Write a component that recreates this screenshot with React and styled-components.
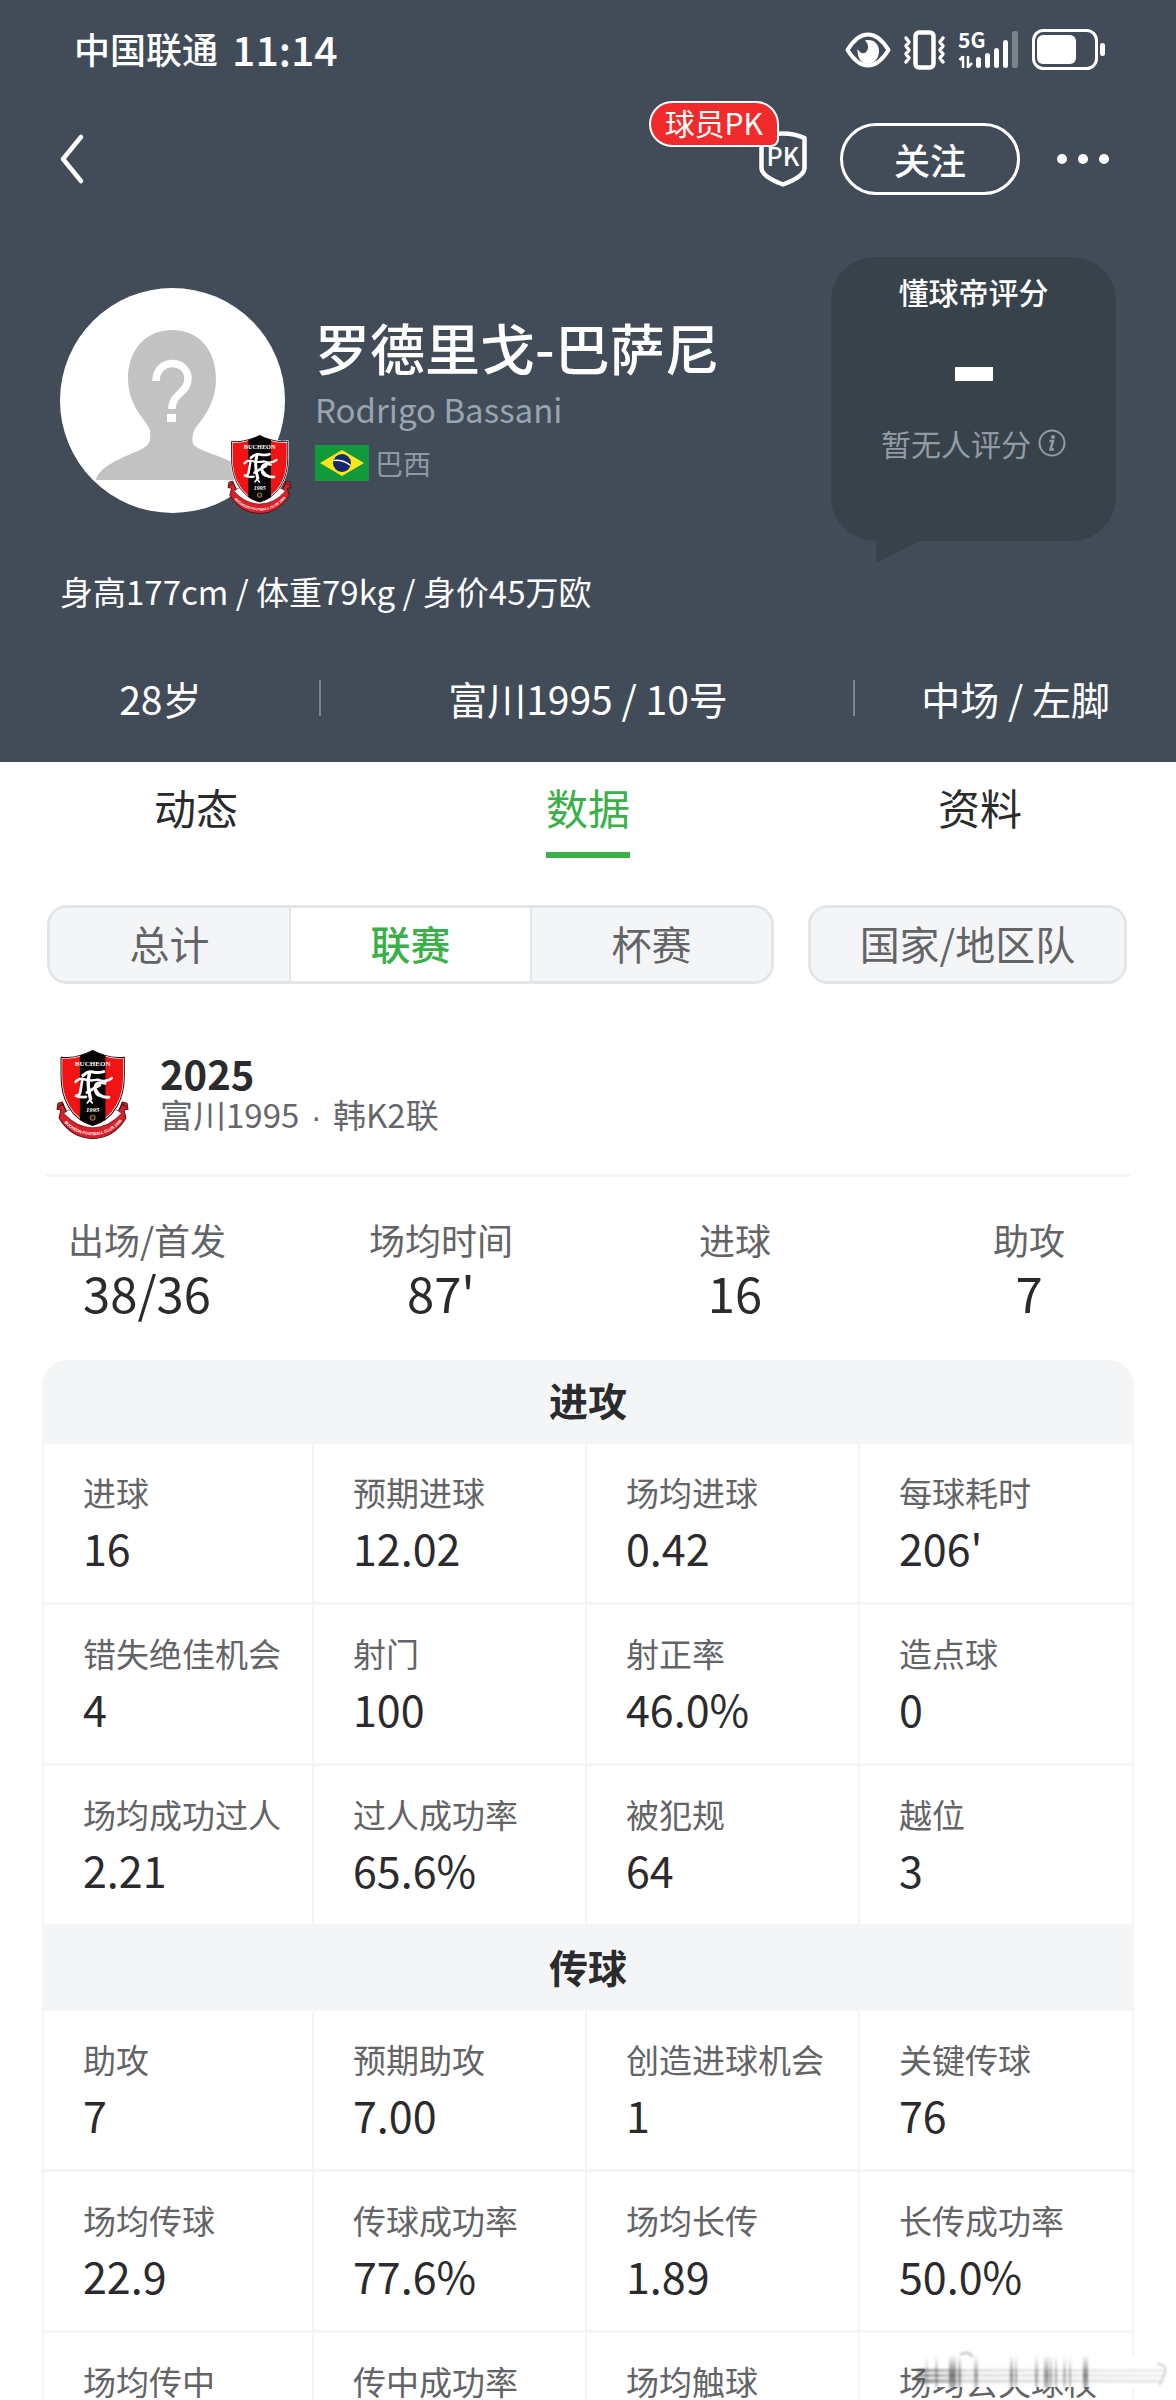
import styled, { createGlobalStyle } from 'styled-components';

const GlobalStyle = createGlobalStyle`
  * {
    box-sizing: border-box;
    margin: 0;
    padding: 0;
  }

  body {
    font-family: 'Noto Sans CJK SC', 'Noto Sans', sans-serif;
    background: #ffffff;
    color: #2b2b2d;
  }

  button {
    font-family: inherit;
    border: none;
    background: none;
    cursor: pointer;
  }

  svg {
    overflow: visible;
  }
`;

const Page = styled.div`
  height: 100vh;
  overflow: hidden;
`;

const Header = styled.header`
  background-color: #414c58;
  color: #ffffff;
  padding-bottom: 35px;
`;

const StatusBar = styled.div`
  display: flex;
  align-items: center;
  justify-content: space-between;
  height: 100px;
  padding: 0 70px 0 74px;
`;

const Carrier = styled.div`
  display: flex;
  align-items: center;
  gap: 14px;
  padding-bottom: 5px;
  font-size: 36px;
  font-weight: 500;
  line-height: 48px;
`;

const Clock = styled.span`
  font-size: 41px;
  font-weight: 500;
`;

const StatusIcons = styled.div`
  display: flex;
  align-items: center;
  gap: 12px;
`;

const NavBar = styled.nav`
  display: flex;
  align-items: center;
  height: 118px;
  padding: 0 64px 0 54px;
`;

const IconButton = styled.button`
  display: flex;
  align-items: center;
  color: #ffffff;
`;

const PkButton = styled(IconButton)`
  position: relative;
  margin-left: auto;
`;

const PkBadge = styled.span`
  position: absolute;
  right: 28px;
  bottom: 40px;
  height: 46px;
  padding: 0 14px;
  border: 2px solid #ffffff;
  border-radius: 23px 23px 8px 23px;
  background-color: #f12b2b;
  font-size: 30px;
  line-height: 39px;
  white-space: nowrap;
`;

const FollowButton = styled.button`
  width: 180px;
  height: 72px;
  margin: 0 34px 0 33px;
  border: 3px solid #ffffff;
  border-radius: 36px;
  color: #ffffff;
  font-size: 36px;
  font-weight: 500;
  line-height: 62px;
`;

const Profile = styled.section`
  display: flex;
  align-items: flex-start;
  padding: 39px 60px 0;
`;

const Avatar = styled.div`
  position: relative;
  width: 225px;
  height: 225px;
  margin-top: 31px;
`;

const AvatarCrest = styled.span`
  position: absolute;
  right: -6px;
  bottom: -1px;
  display: flex;
`;

const Identity = styled.div`
  flex: 1;
  margin: 54px 0 0 30px;
`;

const PlayerName = styled.h1`
  font-size: 55px;
  font-weight: 500;
  line-height: 70px;
`;

const LatinName = styled.p`
  margin-top: 4px;
  color: #9aa4af;
  font-size: 33px;
  line-height: 48px;
`;

const Country = styled.p`
  display: flex;
  align-items: center;
  gap: 6px;
  margin-top: 10px;
  color: #8f99a3;
  font-size: 28px;
  line-height: 40px;
`;

const ScoreBubble = styled.aside`
  position: relative;
  display: flex;
  flex-direction: column;
  align-items: center;
  width: 285px;
  height: 284px;
  padding-top: 14px;
  border-radius: 44px;
  background-color: #37424a;

  &::after {
    content: '';
    position: absolute;
    left: 45px;
    top: 283px;
    width: 46px;
    height: 23px;
    background-color: #37424a;
    clip-path: polygon(0 0, 100% 0, 0 100%);
  }
`;

const ScoreTitle = styled.h2`
  font-size: 30px;
  font-weight: 500;
  line-height: 40px;
`;

const ScoreDash = styled.span`
  width: 38px;
  height: 14px;
  margin: 56px 0 42px;
  background-color: #ffffff;
`;

const ScoreNote = styled.p`
  display: flex;
  align-items: center;
  gap: 7px;
  color: #949aa3;
  font-size: 30px;
  line-height: 40px;
`;

const Physique = styled.p`
  padding: 26px 60px 0;
  font-size: 33px;
  line-height: 48px;
`;

const Facts = styled.ul`
  display: grid;
  grid-template-columns: 3fr 5fr 3fr;
  margin-top: 54px;
  list-style: none;
`;

const Fact = styled.li`
  display: flex;
  align-items: center;
  justify-content: center;
  position: relative;
  font-size: 39px;
  line-height: 58px;

  & + &::before {
    content: '';
    position: absolute;
    left: -2px;
    width: 2px;
    height: 36px;
    background-color: #7d858f;
  }
`;

const Tabs = styled.div`
  display: grid;
  grid-template-columns: repeat(3, 1fr);
  justify-items: center;
  padding-top: 16px;
`;

const Tab = styled.button`
  padding-bottom: 16px;
  border-bottom: 6px solid ${(props) => (props.$active ? '#3bb04a' : 'transparent')};
  color: ${(props) => (props.$active ? '#3bb04a' : '#2b2b2d')};
  font-size: 42px;
  line-height: 58px;
`;

const Filters = styled.div`
  display: flex;
  gap: 34px;
  padding: 47px 49px 0 47px;
`;

const Segment = styled.div`
  display: flex;
  flex: 730;
  border: 3px solid #e3e6e9;
  border-radius: 20px;
  background-color: #f4f5f7;
  overflow: hidden;
`;

const SegmentButton = styled.button`
  flex: 1;
  padding-bottom: 2px;
  color: ${(props) => (props.$active ? '#3bb04a' : '#636466')};
  background-color: ${(props) => (props.$active ? '#ffffff' : '#f4f5f7')};
  font-size: 40px;
  font-weight: ${(props) => (props.$active ? 500 : 400)};
  line-height: 71px;

  & + & {
    border-left: 2px solid #e3e6e9;
  }
`;

const NationalSegment = styled(Segment)`
  flex: 317;
`;

const Season = styled.section`
  display: flex;
  align-items: center;
  gap: 32px;
  margin: 0 46px;
  padding: 66px 0 35px 11px;
  border-bottom: 3px solid #f5f5f7;
`;

const SeasonYear = styled.h2`
  font-size: 40px;
  font-weight: 700;
  line-height: 42px;
`;

const SeasonClub = styled.p`
  color: #66676a;
  font-size: 33px;
  line-height: 40px;
`;

const Dot = styled.span`
  margin: 0 4px;
  font-family: 'Liberation Sans', sans-serif;
`;

const Summary = styled.div`
  display: grid;
  grid-template-columns: repeat(4, 1fr);
  padding: 37px 0 40px;
  text-align: center;
`;

const SummaryLabel = styled.dt`
  color: #636466;
  font-size: 36px;
  line-height: 50px;
`;

const SummaryValue = styled.dd`
  font-size: 49px;
  line-height: 56px;
`;

const StatsPanel = styled.main`
  margin: 0 42px;
`;

const GroupTitle = styled.h3`
  background-color: #f4f5f7;
  border-radius: ${(props) => (props.$first ? '26px 26px 0 0' : '0')};
  font-size: 39px;
  font-weight: 700;
  line-height: 78px;
  padding-bottom: 6px;
  text-align: center;
`;

const StatGrid = styled.div`
  display: grid;
  grid-template-columns: 270fr 273fr 273fr 272fr;
  border: solid #f4f5f7;
  border-width: 0 2px;
`;

const Stat = styled.dl`
  position: relative;
  min-height: 161px;
  padding: 24px 0 0 39px;
  border-bottom: 3px solid #f5f5f7;
  white-space: nowrap;

  &:not(:nth-child(4n)) {
    border-right: 2px solid #f4f5f7;
  }
`;

const StatLabel = styled.dt`
  color: #636466;
  font-size: 33px;
  line-height: 48px;
`;

const StatValue = styled.dd`
  margin-top: 3px;
  font-size: 43px;
  line-height: 56px;
`;

const SmearArt = styled.svg`
  position: absolute;
  left: 57px;
  top: 16px;
`;

const facts = ['28岁', '富川1995 / 10号', '中场 / 左脚'];
const tabs = ['动态', '数据', '资料'];
const scopes = ['总计', '联赛', '杯赛'];

const summary = [
  ['出场/首发', '38/36'],
  ['场均时间', "87'"],
  ['进球', '16'],
  ['助攻', '7'],
];

const groups = [
  {
    title: '进攻',
    stats: [
      ['进球', '16'],
      ['预期进球', '12.02'],
      ['场均进球', '0.42'],
      ['每球耗时', "206'"],
      ['错失绝佳机会', '4'],
      ['射门', '100'],
      ['射正率', '46.0%'],
      ['造点球', '0'],
      ['场均成功过人', '2.21'],
      ['过人成功率', '65.6%'],
      ['被犯规', '64'],
      ['越位', '3'],
    ],
  },
  {
    title: '传球',
    stats: [
      ['助攻', '7'],
      ['预期助攻', '7.00'],
      ['创造进球机会', '1'],
      ['关键传球', '76'],
      ['场均传球', '22.9'],
      ['传球成功率', '77.6%'],
      ['场均长传', '1.89'],
      ['长传成功率', '50.0%'],
      ['场均传中'],
      ['传中成功率'],
      ['场均触球'],
      ['场均丢失球权'],
    ],
  },
];

const EyeIcon = () => (
  <svg width="46" height="36" viewBox="0 0 46 36" fill="none">
    <path d="M2.5 18Q12 2.5 23 2.5T43.5 18Q34 33.5 23 33.5T2.5 18Z" stroke="#fff" strokeWidth="4" strokeLinejoin="round" />
    <path d="M20 8.5C28 6.5 34 12 34 19C34 27 28 32 23 32C16 32 12 25 12.5 17C15 21 18 22 20.5 20.5C24 18 24 12 20 8.5Z" fill="#fff" />
  </svg>
);

const VibrateIcon = () => (
  <svg width="43" height="40" viewBox="0 0 43 40" fill="none" stroke="#fff" strokeLinecap="round" strokeLinejoin="round">
    <rect x="12.5" y="2.5" width="18" height="35" rx="3.5" strokeWidth="4.5" />
    <path d="M3 8l3 4-3 4 3 4-3 4 3 4-3 4M40 8l-3 4 3 4-3 4 3 4-3 4 3 4" strokeWidth="3.5" />
  </svg>
);

const SignalIcon = () => (
  <svg width="62" height="40" viewBox="0 0 62 40" fill="#fff">
    <text x="0" y="18" fontSize="21" fontWeight="700" fontFamily="'Liberation Sans Narrow', 'Noto Sans CJK SC', sans-serif">5G</text>
    <path d="M5 26v12M5 26.5L1.5 30M10 26v12M10 37.5L14 33" stroke="#fff" strokeWidth="2.5" fill="none" />
    <rect x="18" y="27" width="5" height="11" rx="2.5" />
    <rect x="27" y="23" width="5" height="15" rx="2.5" />
    <rect x="36" y="18" width="5" height="20" rx="2.5" />
    <rect x="45" y="10" width="5" height="28" rx="2.5" />
    <rect x="54" y="1" width="6" height="37" rx="2.5" opacity="0.3" />
  </svg>
);

const BatteryIcon = () => (
  <svg width="74" height="42" viewBox="0 0 74 42">
    <rect x="1.5" y="1.5" width="63" height="38" rx="10" fill="none" stroke="#fff" strokeWidth="3" />
    <rect x="5" y="6" width="39" height="29" rx="6" fill="#fff" />
    <rect x="68" y="14" width="5" height="13" rx="2.5" fill="#fff" />
  </svg>
);

const BackIcon = () => (
  <svg width="36" height="50" viewBox="0 0 36 50" fill="none">
    <path d="M27 3L9 25L27 47" stroke="#fff" strokeWidth="4.5" strokeLinecap="round" strokeLinejoin="round" />
  </svg>
);

const PkShield = () => (
  <svg width="48" height="56" viewBox="0 0 48 56" fill="none">
    <path d="M24 2.5C32 2.5 39 4 45.5 7V37C45.5 44 36 49 24 53.5C12 49 2.5 44 2.5 37V7C9 4 16 2.5 24 2.5Z" stroke="#fff" strokeWidth="4.5" strokeLinejoin="round" />
    <text x="24" y="35" textAnchor="middle" fontSize="25" fontWeight="500" fill="#fff" fontFamily="'Noto Sans CJK SC', sans-serif">PK</text>
  </svg>
);

const MoreIcon = () => (
  <svg width="58" height="12" viewBox="0 0 58 12" fill="#fff">
    <circle cx="8" cy="6" r="5" />
    <circle cx="29" cy="6" r="5" />
    <circle cx="50" cy="6" r="5" />
  </svg>
);

const AvatarArt = () => (
  <svg width="225" height="225" viewBox="0 0 225 225">
    <circle cx="112.5" cy="112.5" r="112.5" fill="#fff" />
    <path
      d="M112 42C139 42 156 62 156 91C156 112 146 127 137 138C132 144 132 151 133 156C142 167 180 168 188 192H36C38 180 60 170 78 163C86 159 92 156 90 144C90 139 87 137 83 131C72 116 68 104 68 90C68 62 86 42 112 42Z"
      fill="#c2c2c2"
    />
    <path d="M96 93C96 70 128 70 128 91C128 105 112 105 112 121" fill="none" stroke="#fff" strokeWidth="7.5" />
    <rect x="107" y="126" width="9" height="8" fill="#fff" />
  </svg>
);

const Crest = ({ width, height, id }) => (
  <svg width={width} height={height} viewBox="0 0 211 264">
    <path d="M16 154L3 158L0 176L12 178L6 202Q42 262 106 263Q169 262 205 202L199 178L211 176L208 158L194 154L176 200H34Z" fill="#d9202a" stroke="#4d0f14" strokeWidth="3" strokeLinejoin="round" />
    <path d="M4 172L16 160L28 180M207 172L195 160L183 180" fill="none" stroke="#4d0f14" strokeWidth="3" />
    <path d="M20 188Q58 230 106 231Q154 230 192 188L178 178H34Z" fill="#fff" stroke="#4d0f14" strokeWidth="2" />
    <path d="M12 21Q44 25 71 15Q91 9 106 1Q121 9 141 15Q168 25 200 21V78C200 143 172 205 106 224C40 205 12 143 12 78Z" fill="#f21414" stroke="#fff" strokeWidth="7" strokeLinejoin="round" />
    <path d="M68 16Q91 9 106 1Q121 9 144 16V208Q128 219 106 224Q84 219 68 208Z" fill="#050505" />
    <path d="M12 21Q44 25 71 15Q91 9 106 1Q121 9 141 15Q168 25 200 21V78C200 143 172 205 106 224C40 205 12 143 12 78Z" fill="none" stroke="#1c0708" strokeWidth="3" strokeLinejoin="round" />
    <text x="106" y="47" textAnchor="middle" fontFamily="'Liberation Serif', serif" fontSize="21" fontWeight="700" fill="#fff">BUCHEON</text>
    <g fill="none" stroke="#fff" strokeLinecap="round">
      <path d="M77 76Q92 61 107 65T139 64" strokeWidth="9" />
      <path d="M55 95Q66 81 82 87T121 88Q146 98 163 83" strokeWidth="7" />
      <path d="M97 67Q87 102 100 145" strokeWidth="10" />
      <path d="M75 89L69 126Q65 139 54 134Q65 142 86 139" strokeWidth="8" />
      <path d="M143 99Q112 91 113 114Q114 137 132 136" strokeWidth="8" />
      <path d="M89 126Q115 110 127 104M112 113Q126 144 154 140" strokeWidth="9" />
      <path d="M97 133V150M90 157L97 148L105 157" strokeWidth="5" />
    </g>
    <text x="106" y="184" textAnchor="middle" fontFamily="'Liberation Serif', serif" fontSize="20" fontWeight="700" fontStyle="italic" fill="#fff">1995</text>
    <circle cx="106" cy="201" r="9" fill="#9b7446" />
    <path d="M106 194l6 5-2 7h-8l-2-7z" fill="#30200f" />
    <path id={id} d="M21 215Q56 252 106 253Q156 252 194 211" fill="none" />
    <text fontFamily="'Liberation Sans', sans-serif" fontSize="12" fontWeight="700" fill="#fff">
      <textPath href={`#${id}`} startOffset="50%" textAnchor="middle">BUCHEON FOOTBALL CLUB 1995</textPath>
    </text>
  </svg>
);

const BrazilFlag = () => (
  <svg width="54" height="36" viewBox="0 0 54 36">
    <rect width="54" height="36" fill="#119a3b" />
    <path d="M27 5L49 18L27 31L5 18Z" fill="#fde51a" />
    <circle cx="27" cy="18" r="9" fill="#14286c" />
    <path d="M18.5 15.5Q28 14.5 35.5 20.5" fill="none" stroke="#fff" strokeWidth="1.5" />
  </svg>
);

const InfoIcon = () => (
  <svg width="28" height="28" viewBox="0 0 28 28" fill="none" stroke="#949aa3">
    <circle cx="14" cy="14" r="12.5" strokeWidth="2" />
    <path d="M11.5 12H15L12.5 20.5H16" strokeWidth="2.5" />
    <circle cx="15" cy="8" r="1" strokeWidth="2" />
  </svg>
);

// x, bar width, opacity
const smearBars = [
  [8, 3, 0.3], [18, 3, 0.45], [32, 7, 0.75], [41, 3, 0.6], [57, 4, 0.5],
  [93, 3, 0.65], [98, 2, 0.55], [118, 3, 0.5], [127, 5, 0.6], [133, 2, 0.55],
  [138, 2, 0.5], [146, 3, 0.4], [152, 2, 0.45], [166, 5, 0.7],
];

const Smear = () => (
  <SmearArt width="256" height="50" viewBox="0 0 256 50" aria-hidden="true">
    <defs>
      <linearGradient id="smearFade" x1="0" y1="0" x2="0" y2="1">
        <stop offset="0" stopColor="#55565a" stopOpacity="0" />
        <stop offset="0.6" stopColor="#55565a" stopOpacity="1" />
        <stop offset="1" stopColor="#55565a" stopOpacity="0.6" />
      </linearGradient>
      <linearGradient id="smearTrail" x1="0" y1="0" x2="1" y2="0">
        <stop offset="0" stopColor="#55565a" stopOpacity="0.7" />
        <stop offset="0.2" stopColor="#55565a" stopOpacity="0.2" />
        <stop offset="1" stopColor="#55565a" stopOpacity="0.1" />
      </linearGradient>
      <filter id="smearBlur">
        <feGaussianBlur stdDeviation="0.9" />
      </filter>
    </defs>
    <rect x="8" y="8" width="238" height="30" fill="#fff" />
    <g filter="url(#smearBlur)">
      {smearBars.map(([x, width, opacity]) => (
        <rect key={x} x={x} y="6" width={width} height="33" fill="url(#smearFade)" opacity={opacity} />
      ))}
      <rect x="0" y="20" width="246" height="3" fill="url(#smearTrail)" />
      <rect x="0" y="25" width="246" height="3" fill="url(#smearTrail)" />
      <rect x="0" y="30" width="246" height="4" fill="url(#smearTrail)" />
      <path d="M43 6Q50 1 56 8" stroke="#c4c4c6" strokeWidth="2" fill="none" />
      <path d="M240 15Q249 15 248 22T242 36" stroke="#d0d0d2" strokeWidth="2" fill="none" />
    </g>
  </SmearArt>
);

const App = () => {
  return (
    <Page>
      <GlobalStyle />
      <Header>
        <StatusBar>
          <Carrier>
            <span>中国联通</span>
            <Clock>11:14</Clock>
          </Carrier>
          <StatusIcons>
            <EyeIcon />
            <VibrateIcon />
            <SignalIcon />
            <BatteryIcon />
          </StatusIcons>
        </StatusBar>
        <NavBar>
          <IconButton aria-label="返回"><BackIcon /></IconButton>
          <PkButton>
            <PkShield />
            <PkBadge>球员PK</PkBadge>
          </PkButton>
          <FollowButton>关注</FollowButton>
          <IconButton aria-label="更多"><MoreIcon /></IconButton>
        </NavBar>
        <Profile>
          <Avatar>
            <AvatarArt />
            <AvatarCrest><Crest width={63} height={79} id="avatarRibbon" /></AvatarCrest>
          </Avatar>
          <Identity>
            <PlayerName>罗德里戈-巴萨尼</PlayerName>
            <LatinName>Rodrigo Bassani</LatinName>
            <Country><BrazilFlag />巴西</Country>
          </Identity>
          <ScoreBubble>
            <ScoreTitle>懂球帝评分</ScoreTitle>
            <ScoreDash />
            <ScoreNote>暂无人评分<InfoIcon /></ScoreNote>
          </ScoreBubble>
        </Profile>
        <Physique>身高177cm / 体重79kg / 身价45万欧</Physique>
        <Facts>
          {facts.map((fact) => <Fact key={fact}>{fact}</Fact>)}
        </Facts>
      </Header>

      <Tabs role="tablist">
        {tabs.map((tab) => (
          <Tab key={tab} role="tab" aria-selected={tab === '数据'} $active={tab === '数据'}>{tab}</Tab>
        ))}
      </Tabs>

      <Filters>
        <Segment>
          {scopes.map((scope) => (
            <SegmentButton key={scope} $active={scope === '联赛'}>{scope}</SegmentButton>
          ))}
        </Segment>
        <NationalSegment>
          <SegmentButton>国家/地区队</SegmentButton>
        </NationalSegment>
      </Filters>

      <Season>
        <Crest width={71} height={89} id="seasonRibbon" />
        <div>
          <SeasonYear>2025</SeasonYear>
          <SeasonClub>富川1995 <Dot>·</Dot> 韩K2联</SeasonClub>
        </div>
      </Season>

      <Summary>
        {summary.map(([label, value]) => (
          <dl key={label}>
            <SummaryLabel>{label}</SummaryLabel>
            <SummaryValue>{value}</SummaryValue>
          </dl>
        ))}
      </Summary>

      <StatsPanel>
        {groups.map((group, index) => (
          <section key={group.title}>
            <GroupTitle $first={index === 0}>{group.title}</GroupTitle>
            <StatGrid>
              {group.stats.map(([label, value]) => (
                <Stat key={label}>
                  <StatLabel>{label}</StatLabel>
                  {value && <StatValue>{value}</StatValue>}
                  {label === '场均丢失球权' && <Smear />}
                </Stat>
              ))}
            </StatGrid>
          </section>
        ))}
      </StatsPanel>
    </Page>
  );
};

export default App;
